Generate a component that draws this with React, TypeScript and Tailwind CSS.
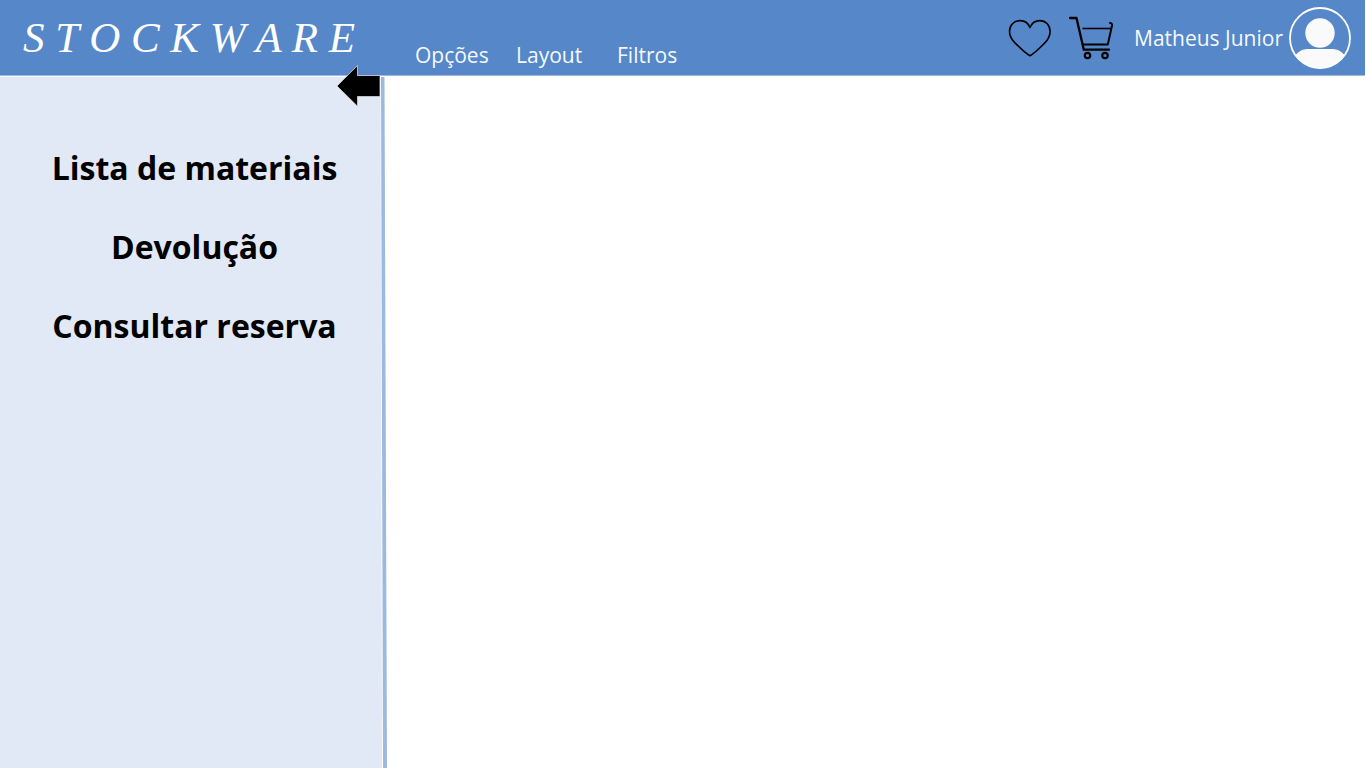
const topLinks = [
  { label: "Opções", className: "w-[101px]" },
  { label: "Layout", className: "w-[101px]" },
  { label: "Filtros", className: "" },
];

const sideLinks = ["Lista de materiais", "Devolução", "Consultar reserva"];

function HeartIcon() {
  return (
    <svg viewBox="0 0 44 38" className="h-[38px] w-11" fill="none" stroke="#000" strokeWidth="1.6" strokeLinejoin="round" aria-hidden="true">
      <path d="M22 8.5C20 3.8 16.500 1.600 12.300 1.600 5.800 1.600 1.500 6.300 1.500 12.500c0 4.400 2.300 8.200 5.700 11.600C11.500 28.400 17 34 22 36.800c5-2.800 10.300-8.400 14.600-12.700 3.400-3.400 5.500-7.200 5.500-11.600C42.100 6.300 38 1.600 31.700 1.600 27.500 1.600 24 3.800 22 8.500z" />
    </svg>
  );
}

function CartIcon() {
  return (
    <svg viewBox="0 0 46 44" className="h-11 w-[46px]" fill="none" stroke="#000" strokeLinecap="round" strokeLinejoin="round" aria-hidden="true">
      <path d="M2 2H8.500L15.800 33.700H41" strokeWidth="2.300" />
      <path d="M14.500 12.500H43" strokeWidth="1.600" strokeLinecap="butt" />
      <path d="M15 28.500H39.800L44 9.500C44.300 7.800 43.400 7 42 7" strokeWidth="2" />
      <circle cx="19.500" cy="39.500" r="2.700" strokeWidth="2.200" />
      <circle cx="37" cy="39.500" r="2.700" strokeWidth="2.200" />
    </svg>
  );
}

function AvatarIcon() {
  return (
    <svg viewBox="0 0 62 62" className="size-[62px]" aria-hidden="true">
      <defs>
        <clipPath id="avatar-clip">
          <circle cx="31" cy="31" r="30.500" />
        </clipPath>
      </defs>
      <circle cx="31" cy="26" r="14.700" fill="#fafafa" />
      <path clipPath="url(#avatar-clip)" d="M6 48.500C10 44 14 42 19 42H43C48 42 52 44 56 48.500V62H6z" fill="#fafafa" />
      <circle cx="31" cy="31" r="30" fill="none" stroke="#fff" strokeWidth="1.800" />
    </svg>
  );
}

export default function App() {
  return (
    <div className="flex min-h-screen flex-col bg-white font-['Open_Sans',sans-serif]">
      <header className="mr-px flex h-[76px] border-b border-[#9db9e0] bg-[#5587c9] text-[#f6f9fd]">
        <h1 className="w-[415px] shrink-0 pt-3 pl-[23px] font-['Liberation_Serif',serif] text-[43px] leading-[52px] whitespace-nowrap text-white italic">
          S T O C K W A R E
        </h1>
        <nav className="flex items-end pb-[5px]" aria-label="Principal">
          {topLinks.map((link) => (
            <a key={link.label} href="#" className={`text-[21px] leading-[30px] ${link.className}`}>
              {link.label}
            </a>
          ))}
        </nav>
        <div className="ml-auto flex items-center pr-3.5">
          <button type="button" aria-label="Favoritos" className="mr-4">
            <HeartIcon />
          </button>
          <button type="button" aria-label="Carrinho" className="mr-5">
            <CartIcon />
          </button>
          <a href="#" className="flex items-center gap-1.5 text-[21px] leading-[30px] whitespace-nowrap">
            Matheus Junior
            <AvatarIcon />
          </a>
        </div>
      </header>
      <div className="flex grow pt-px">
        <aside className="relative flex w-[387px] shrink-0">
          <nav className="grow bg-[#e1e8f6] pt-[67px] pl-[9px]" aria-label="Lateral">
            <ul className="flex flex-col gap-[31px] text-center text-[32px] leading-[48px] font-bold text-black">
              {sideLinks.map((label) => (
                <li key={label}>
                  <a href="#">{label}</a>
                </li>
              ))}
            </ul>
          </nav>
          <svg viewBox="0 0 7 691" preserveAspectRatio="none" className="w-[7px] self-stretch bg-white" aria-hidden="true">
            <path d="M0 0H.500L2 691H0z" fill="#e1e8f6" />
            <path d="M1 0H4.500L7 691H3z" fill="#9db9e0" />
          </svg>
          <button type="button" aria-label="Recolher menu" className="absolute -top-3 right-[7px]">
            <svg viewBox="0 0 44 42" className="h-[42px] w-11" aria-hidden="true">
              <path d="M1 21L21.500 .500V10.500H44V31.500H21.500V41.200z" fill="#000" stroke="#d8d4cc" strokeWidth=".8" />
            </svg>
          </button>
        </aside>
        <main className="grow bg-white" />
      </div>
    </div>
  );
}
